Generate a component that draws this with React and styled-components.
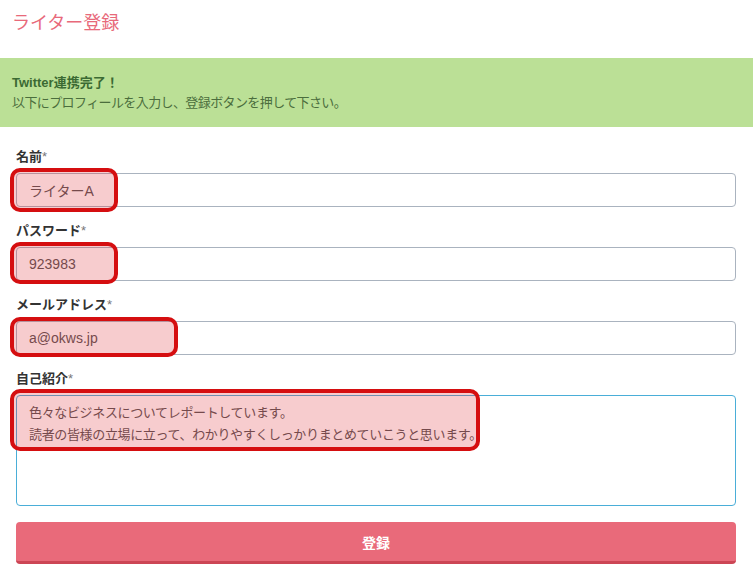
import styled, { createGlobalStyle } from 'styled-components';

const GlobalStyle = createGlobalStyle`
  body {
    margin: 0;
    background: #fff;
    font-family: "Liberation Sans", "Noto Sans CJK JP", sans-serif;
  }
`;

const Page = styled.div`
  width: 753px;
`;

const Header = styled.header`
  height: 58px;
  padding: 10px 12px 0;
  box-sizing: border-box;
`;

const Title = styled.h1`
  margin: 0;
  font-size: 18px;
  line-height: 26px;
  font-weight: normal;
  color: #e8697a;
`;

const Notice = styled.div`
  background: #bbe096;
  height: 69px;
  padding: 15px 12px 0;
  box-sizing: border-box;
  font-size: 13px;
  line-height: 20px;
  letter-spacing: -0.6px;
  color: #4b6e3d;
`;

const NoticeTitle = styled.div`
  font-weight: bold;
  letter-spacing: 0;
  color: #3b6a33;
`;

const Form = styled.form`
  padding: 21px 17px 20px 16px;
`;

const Field = styled.div`
  position: relative;
  margin-bottom: ${({ $last }) => ($last ? '16px' : '15px')};
`;

const Label = styled.label`
  display: block;
  font-size: 13px;
  line-height: 18px;
  font-weight: bold;
  color: #333;
  margin-bottom: 7px;

  span {
    font-weight: normal;
    color: #777;
  }
`;

const TextInput = styled.div`
  height: 34px;
  box-sizing: border-box;
  border: 1px solid #aab3bf;
  border-radius: 4px;
  padding: 0 12px;
  display: flex;
  align-items: center;
  font-size: 14px;
  color: #555;
`;

const TextArea = styled.div`
  height: 111px;
  box-sizing: border-box;
  border: 1px solid #4aaed8;
  border-radius: 4px;
  padding: 6px 12px;
  font-size: 13px;
  line-height: 22px;
  letter-spacing: -0.35px;
  color: #555;
`;

const Mark = styled.div`
  position: absolute;
  left: -6px;
  top: ${({ $top }) => $top}px;
  width: ${({ $w }) => $w}px;
  height: ${({ $h }) => $h}px;
  box-sizing: border-box;
  border: 4px solid #d50e10;
  border-radius: 10px;
  background: rgba(220, 40, 50, 0.24);
  pointer-events: none;
`;

const Submit = styled.button`
  display: block;
  width: 100%;
  height: 42px;
  border: none;
  border-bottom: 3px solid #cc4655;
  border-radius: 4px;
  background: #e96a7a;
  color: #fff;
  font-family: inherit;
  font-size: 14px;
  font-weight: bold;
`;

const fields = [
  { label: '名前', value: 'ライターA', mark: { top: 20, w: 108, h: 44 } },
  { label: 'パスワード', value: '923983', mark: { top: 20, w: 108, h: 42 } },
  { label: 'メールアドレス', value: 'a@okws.jp', mark: { top: 21, w: 168, h: 40 } },
];

export default function App() {
  return (
    <Page>
      <GlobalStyle />
      <Header>
        <Title>ライター登録</Title>
      </Header>
      <Notice>
        <NoticeTitle>Twitter連携完了！</NoticeTitle>
        <div>以下にプロフィールを入力し、登録ボタンを押して下さい。</div>
      </Notice>
      <Form onSubmit={(e) => e.preventDefault()}>
        {fields.map((f) => (
          <Field key={f.label}>
            <Label>
              {f.label}
              <span>*</span>
            </Label>
            <TextInput>{f.value}</TextInput>
            <Mark $top={f.mark.top} $w={f.mark.w} $h={f.mark.h} />
          </Field>
        ))}
        <Field $last>
          <Label>
            自己紹介<span>*</span>
          </Label>
          <TextArea>
            色々なビジネスについてレポートしています。
            <br />
            読者の皆様の立場に立って、わかりやすくしっかりまとめていこうと思います。
          </TextArea>
          <Mark $top={19} $w={470} $h={62} />
        </Field>
        <Submit type="submit">登録</Submit>
      </Form>
    </Page>
  );
}
